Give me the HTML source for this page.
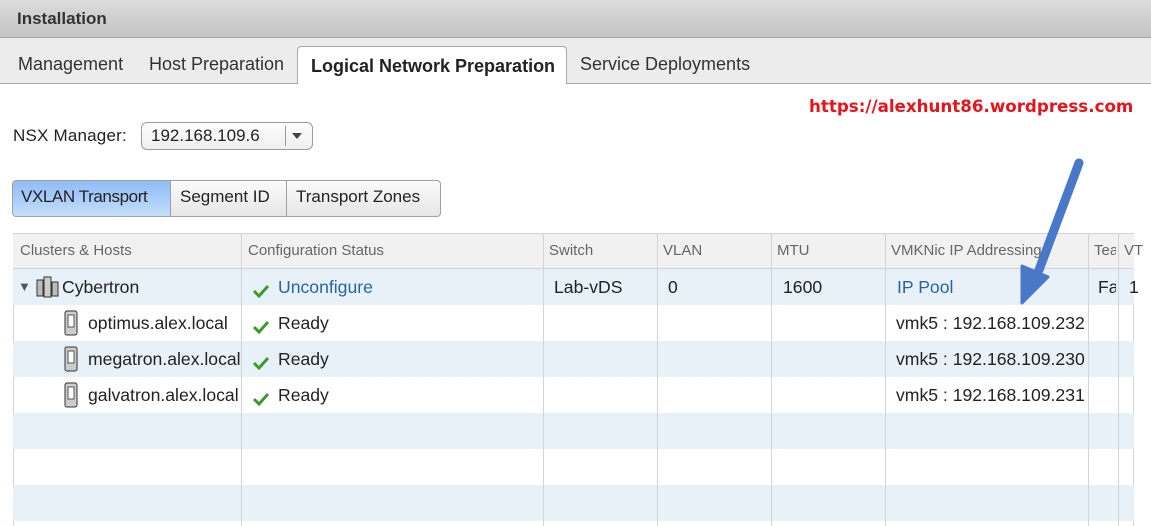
<!DOCTYPE html>
<html><head><style>
*{margin:0;padding:0;box-sizing:border-box}
body{width:1151px;height:526px;overflow:hidden;background:#fff;font-family:"Liberation Sans",Arial,sans-serif;position:relative;color:#222}
.a{position:absolute;white-space:nowrap}
#hdr{left:0;top:0;width:1151px;height:38px;background:linear-gradient(#dcdcdc,#c4c4c4);border-bottom:1px solid #a8a8a8}
#tabs{left:0;top:38px;width:1151px;height:46px;background:#ececec;border-bottom:1px solid #a9a9a9}
.tab{font-size:18px;color:#333;top:54px}
#act{left:297px;top:46px;width:270px;height:38px;background:#fff;border:1px solid #a9a9a9;border-bottom:none;border-radius:4px 4px 0 0}
.cell{position:absolute;font-size:17.6px;white-space:nowrap}
.h{font-size:15px;color:#666;top:242px}
.row{position:absolute;left:13px;width:1121px;height:36px}
.vl{position:absolute;top:233px;width:1px;height:293px;background:#d4d4d4}
</style></head><body>
<div class="a" id="hdr"></div>
<div class="a" style="left:17px;top:9px;font-size:17px;font-weight:bold;color:#333">Installation</div>
<div class="a" id="tabs"></div>
<div class="a" id="act"></div>
<div class="a tab" style="left:18px">Management</div>
<div class="a tab" style="left:149px">Host Preparation</div>
<div class="a tab" style="left:311px;top:56px;font-weight:bold;color:#222">Logical Network Preparation</div>
<div class="a tab" style="left:580px">Service Deployments</div>
<div class="a" style="left:809px;top:96px;font-size:16.7px;font-weight:bold;color:#e8141c;font-family:'DejaVu Sans',sans-serif">https://alexhunt86.wordpress.com</div>
<div class="a" style="left:13px;top:126px;font-size:17px;letter-spacing:0.2px">NSX Manager:</div>
<div class="a" style="left:141px;top:122px;width:172px;height:28px;border:1px solid #9a9a9a;border-radius:6px;background:linear-gradient(#fff,#eee)"></div>
<div class="a" style="left:151px;top:126px;font-size:17px">192.168.109.6</div>
<div class="a" style="left:285px;top:126px;width:1px;height:20px;background:#999"></div>
<div class="a" style="left:292px;top:133px;width:0;height:0;border-left:5px solid transparent;border-right:5px solid transparent;border-top:6px solid #444"></div>
<div class="a" style="left:12px;top:180px;width:429px;height:37px;border:1px solid #a0a0a0;border-radius:4px;background:linear-gradient(#fbfbfb,#e6e6e6)"></div>
<div class="a" style="left:13px;top:181px;width:157px;height:35px;background:linear-gradient(#8fbcf7,#c4defb);border-radius:3px 0 0 3px"></div>
<div class="a" style="left:170px;top:181px;width:1px;height:35px;background:#a0a0a0"></div>
<div class="a" style="left:286px;top:181px;width:1px;height:35px;background:#a0a0a0"></div>
<div class="a" style="left:21px;top:187px;font-size:17px;letter-spacing:-0.4px">VXLAN Transport</div>
<div class="a" style="left:180px;top:187px;font-size:17px">Segment ID</div>
<div class="a" style="left:296px;top:187px;font-size:17px">Transport Zones</div>

<div class="a" style="left:13px;top:233px;width:1121px;height:293px;border:1px solid #d4d4d4;border-bottom:none"></div>
<div class="row" style="top:234px;height:35px;background:#f1f1f1;border-bottom:1px solid #d4d4d4"></div>
<div class="row" style="top:269px;background:#e8f0f8"></div>
<div class="row" style="top:341px;background:#e8f0f8"></div>
<div class="row" style="top:413px;background:#e8f0f8"></div>
<div class="row" style="top:485px;background:#e8f0f8"></div>
<div class="vl" style="left:241px"></div><div class="vl" style="left:543px"></div><div class="vl" style="left:657px"></div><div class="vl" style="left:771px"></div><div class="vl" style="left:885px"></div><div class="vl" style="left:1088px"></div><div class="vl" style="left:1118px"></div>

<div class="cell h" style="left:20px">Clusters &amp; Hosts</div>
<div class="cell h" style="left:248px">Configuration Status</div>
<div class="cell h" style="left:549px">Switch</div>
<div class="cell h" style="left:663px">VLAN</div>
<div class="cell h" style="left:777px">MTU</div>
<div class="cell h" style="left:891px;width:195px;overflow:hidden">VMKNic IP Addressing</div>
<div class="cell h" style="left:1094px;width:22px;overflow:hidden">Team</div>
<div class="cell h" style="left:1124px">VT</div>

<div class="cell" style="left:18px;top:279px;font-size:13px;color:#555">▼</div>
<svg class="a" style="left:36px;top:276px" width="24" height="22"><rect x="1" y="4" width="6" height="16" fill="#bbb" stroke="#333"/><rect x="8" y="1" width="7" height="20" fill="#ccc" stroke="#333"/><rect x="16" y="6" width="6" height="14" fill="#bbb" stroke="#333"/></svg>
<div class="cell" style="left:62px;top:277px">Cybertron</div>
<div class="cell" style="left:278px;top:277px;color:#2a64a0">Unconfigure</div>
<div class="cell" style="left:554px;top:277px">Lab-vDS</div>
<div class="cell" style="left:668px;top:277px">0</div>
<div class="cell" style="left:783px;top:277px">1600</div>
<div class="cell" style="left:897px;top:277px;color:#2a64a0">IP Pool</div>
<div class="cell" style="left:1098px;top:277px;width:18px;overflow:hidden">False</div>
<div class="cell" style="left:1129px;top:277px">1</div>

<svg class="a" style="left:64px;top:310px" width="14" height="26"><rect x="1" y="1" width="12" height="24" rx="2" fill="#ccc" stroke="#333"/><rect x="4" y="5" width="6" height="12" fill="#fff" stroke="#555"/></svg>
<svg class="a" style="left:64px;top:346px" width="14" height="26"><rect x="1" y="1" width="12" height="24" rx="2" fill="#ccc" stroke="#333"/><rect x="4" y="5" width="6" height="12" fill="#fff" stroke="#555"/></svg>
<svg class="a" style="left:64px;top:382px" width="14" height="26"><rect x="1" y="1" width="12" height="24" rx="2" fill="#ccc" stroke="#333"/><rect x="4" y="5" width="6" height="12" fill="#fff" stroke="#555"/></svg>
<div class="cell" style="left:88px;top:313px">optimus.alex.local</div>
<div class="cell" style="left:88px;top:349px;width:152px;overflow:hidden">megatron.alex.local</div>
<div class="cell" style="left:88px;top:385px;width:152px;overflow:hidden">galvatron.alex.local</div>
<div class="cell" style="left:278px;top:313px">Ready</div>
<div class="cell" style="left:278px;top:349px">Ready</div>
<div class="cell" style="left:278px;top:385px">Ready</div>
<svg class="a" style="left:252px;top:283px" width="18" height="16"><path d="M2 8 L7 13 L16 3" fill="none" stroke="#3a9a2a" stroke-width="3"/></svg>
<svg class="a" style="left:252px;top:319px" width="18" height="16"><path d="M2 8 L7 13 L16 3" fill="none" stroke="#3a9a2a" stroke-width="3"/></svg>
<svg class="a" style="left:252px;top:355px" width="18" height="16"><path d="M2 8 L7 13 L16 3" fill="none" stroke="#3a9a2a" stroke-width="3"/></svg>
<svg class="a" style="left:252px;top:391px" width="18" height="16"><path d="M2 8 L7 13 L16 3" fill="none" stroke="#3a9a2a" stroke-width="3"/></svg>
<div class="cell" style="left:896px;top:313px;width:192px;overflow:hidden">vmk5 : 192.168.109.232</div>
<div class="cell" style="left:896px;top:349px;width:192px;overflow:hidden">vmk5 : 192.168.109.230</div>
<div class="cell" style="left:896px;top:385px;width:192px;overflow:hidden">vmk5 : 192.168.109.231</div>

<svg class="a" style="left:0;top:0" width="1151" height="526"><path d="M1079 163 L1039 270" stroke="#4a78c8" stroke-width="9" stroke-linecap="round"/><path d="M1022 303 L1022 266 L1048 277 Z" fill="#4a78c8" stroke="#4a78c8" stroke-width="3" stroke-linejoin="round"/></svg>
</body></html>
